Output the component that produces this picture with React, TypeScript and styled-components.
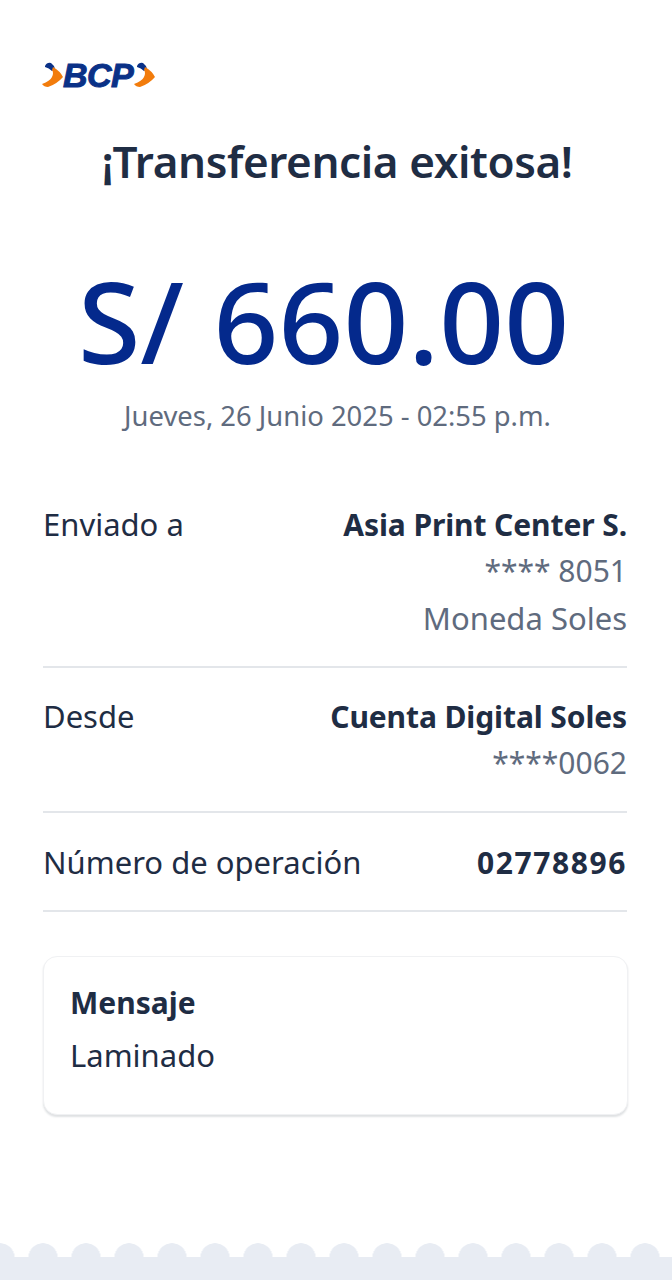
import styled, { createGlobalStyle } from 'styled-components';

const GlobalStyle = createGlobalStyle`
  html, body {
    margin: 0;
    padding: 0;
    background: #ffffff;
  }
  * {
    box-sizing: border-box;
  }
`;

const Page = styled.div`
  width: 672px;
  height: 1280px;
  display: flex;
  flex-direction: column;
  overflow: hidden;
  background: #ffffff;
  font-family: 'Noto Sans', sans-serif;
  color: #1f2d44;
`;

const Content = styled.main`
  flex: 1;
  padding: 56px 45px 0 43px;
  display: flex;
  flex-direction: column;
`;

const Logo = styled.div`
  display: flex;
  align-items: center;
  height: 38px;
  margin-left: -1px;
`;

const LogoText = styled.span`
  font-family: 'Liberation Sans', sans-serif;
  font-style: italic;
  font-weight: 700;
  font-size: 34px;
  letter-spacing: -0.6px;
  line-height: 38px;
  color: #0a3187;
  -webkit-text-stroke: 1px #0a3187;
  margin: 0 1px 0 -3px;
`;

const Title = styled.h1`
  margin: 40px 0 0;
  padding-left: 4px;
  text-align: center;
  font-size: 44px;
  line-height: 54px;
  font-weight: 600;
  letter-spacing: -0.4px;
  color: #1f2d44;
`;

const Amount = styled.div`
  margin-top: 67px;
  padding-right: 23px;
  text-align: center;
  font-size: 113.5px;
  line-height: 130px;
  font-weight: 500;
  color: #04298c;
`;

const DateLine = styled.div`
  margin-top: 14px;
  padding-left: 5px;
  text-align: center;
  font-size: 27.4px;
  line-height: 34px;
  color: #5f6b7e;
`;

const Details = styled.section`
  margin-top: 43px;
`;

const Row = styled.div<{ $height: number; $top?: number }>`
  height: ${(p) => p.$height}px;
  padding-top: ${(p) => p.$top ?? 25}px;
  display: flex;
  justify-content: space-between;
  align-items: flex-start;
  border-bottom: 2px solid #e3e6ea;
`;

const Label = styled.div`
  font-size: 31px;
  line-height: 47px;
  color: #1f2d44;
`;

const Values = styled.div`
  display: flex;
  flex-direction: column;
  align-items: flex-end;
`;

const Strong = styled.div`
  font-size: 30px;
  line-height: 47px;
  font-weight: 700;
  letter-spacing: -0.1px;
  color: #1f2d44;
`;

const OperationNumber = styled(Strong)`
  letter-spacing: 1.6px;
`;

const Muted = styled.div`
  font-size: 31px;
  line-height: 46.5px;
  color: #5f6b7e;
`;

const MutedNumber = styled(Muted)`
  font-size: 30px;
`;

const MessageCard = styled.section`
  margin-top: 44px;
  margin-right: -1px;
  height: 159px;
  padding: 22px 26px;
  border: 1px solid #f0f1f3;
  border-radius: 14px;
  box-shadow: 0 2px 2px rgba(30, 40, 60, 0.14);
  background: #ffffff;
`;

const MessageTitle = styled.div`
  font-size: 30px;
  line-height: 47px;
  font-weight: 700;
  color: #1f2d44;
`;

const MessageText = styled.div`
  font-size: 31px;
  line-height: 58px;
  color: #1f2d44;
`;

const Scallop = styled.footer`
  height: 37px;
  flex: none;
  background-image:
    radial-gradient(circle at 21.5px 15px, #e8ecf3 14.5px, transparent 15px),
    linear-gradient(#e8ecf3, #e8ecf3);
  background-size: 43px 37px, 100% 23px;
  background-position: -21.5px 0, 0 14px;
  background-repeat: repeat-x, no-repeat;
`;

function Chevron() {
    return (
        <svg width="24" height="26" viewBox="0 0 24 26" style={{ display: 'block', flex: 'none' }}>
            <path d="M3 4 Q5 0 9 1 Q12 3 13 7 L10 9 Q7 6 3 5 Z" fill="#0a3187" />
            <path d="M11 5 Q18 9 21 15 Q15 22 6 25 Q2 25 0 22 Q8 19 10 15 Q12 11 10 8 Z" fill="#f27c0c" />
        </svg>
    );
}

function App() {
    return (
        <Page>
            <GlobalStyle />
            <Content>
                <Logo>
                    <Chevron />
                    <LogoText>BCP</LogoText>
                    <Chevron />
                </Logo>
                <Title>¡Transferencia exitosa!</Title>
                <Amount>S/ 660.00</Amount>
                <DateLine>Jueves, 26 Junio 2025 - 02:55 p.m.</DateLine>
                <Details>
                    <Row $height={192}>
                        <Label>Enviado a</Label>
                        <Values>
                            <Strong>Asia Print Center S.</Strong>
                            <MutedNumber>**** 8051</MutedNumber>
                            <Muted>Moneda Soles</Muted>
                        </Values>
                    </Row>
                    <Row $height={145}>
                        <Label>Desde</Label>
                        <Values>
                            <Strong>Cuenta Digital Soles</Strong>
                            <MutedNumber>****0062</MutedNumber>
                        </Values>
                    </Row>
                    <Row $height={99} $top={26}>
                        <Label>Número de operación</Label>
                        <Values>
                            <OperationNumber>02778896</OperationNumber>
                        </Values>
                    </Row>
                </Details>
                <MessageCard>
                    <MessageTitle>Mensaje</MessageTitle>
                    <MessageText>Laminado</MessageText>
                </MessageCard>
            </Content>
            <Scallop />
        </Page>
    );
}

export default App;
